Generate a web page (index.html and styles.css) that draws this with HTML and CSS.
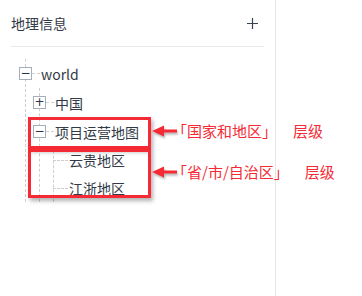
FILE: index.html
```html
<!DOCTYPE html>
<html lang="zh-CN">
<head>
  <meta charset="UTF-8">
  <title>地理信息</title>
  <link rel="stylesheet" href="styles.css">
</head>
<body>

<div class="page">
  <div class="sidebar">
    <div class="panel-head">
      <h2>地理信息</h2>
      <svg class="add" width="11" height="11" viewBox="0 0 11 11">
        <path d="M5.5 0v11M0 5.5h11" stroke="#3a4150" stroke-width="1.2"/>
      </svg>
    </div>

    <ul class="tree root">
      <li>
        <div class="node">
          <span class="toggle">&minus;</span><span class="dash"></span><span class="label">world</span>
        </div>
        <ul class="tree">
          <li>
            <div class="node">
              <span class="toggle">+</span><span class="dash"></span><span class="label">中国</span>
            </div>
          </li>
          <li>
            <div class="node">
              <span class="toggle">&minus;</span><span class="dash"></span><span class="label">项目运营地图</span>
            </div>
            <ul class="tree">
              <li>
                <div class="node leaf"><span class="dash"></span><span class="label">云贵地区</span></div>
              </li>
              <li>
                <div class="node leaf"><span class="dash"></span><span class="label">江浙地区</span></div>
              </li>
            </ul>
          </li>
        </ul>
      </li>
    </ul>
  </div>

  <!-- annotations drawn over the tree -->
  <div class="mark mark-country"></div>
  <div class="mark mark-province"></div>

  <div class="note note-country">
    <svg class="arrow" width="25" height="12" viewBox="0 0 25 12">
      <path d="M0 6L12 0.5V4.5H25V7.5H12V11.5Z" fill="#f52a34"/>
    </svg>
    <span>「国家和地区」</span><span class="level">层级</span>
  </div>
  <div class="note note-province">
    <svg class="arrow" width="25" height="12" viewBox="0 0 25 12">
      <path d="M0 6L12 0.5V4.5H25V7.5H12V11.5Z" fill="#f52a34"/>
    </svg>
    <span>「省/市/自治区」</span><span class="level">层级</span>
  </div>
</div>

</body>
</html>
```

FILE: styles.css
```css
body {
  margin: 0;
  font-family: "Noto Sans CJK SC", "Noto Sans", sans-serif;
  color: #333;
  background: #fff;
}
.page {
  position: relative;
  height: 296px;
  overflow: hidden;
}
.sidebar {
  width: 275px;
  height: 100%;
  border-right: 1px solid #e6e6e6;
  box-sizing: content-box;
}
.panel-head {
  display: flex;
  align-items: center;
  justify-content: space-between;
  margin: 0 11px;
  height: 46px;
  border-bottom: 1px solid #e8e8e8;
}
.panel-head h2 {
  margin: 0;
  font-size: 14px;
  font-weight: normal;
  color: #333a47;
}
.add {
  margin-right: 6px;
}
.tree {
  list-style: none;
  margin: 0;
  padding: 0;
  border-left: 1px dashed #cfcfcf;
}
.root {
  margin: 12px 0 0 25px;
}
.tree .tree {
  margin-left: 13px;
}
.node {
  display: flex;
  align-items: center;
  height: 29px;
  font-size: 14px;
}
.tree .tree .tree .node {
  height: 28px;
}
.toggle {
  width: 11px;
  height: 11px;
  margin-left: -7px;
  border: 1px solid #a7aebb;
  background: #fff;
  color: #2b3447;
  font-family: "DejaVu Sans", sans-serif;
  font-size: 12px;
  line-height: 10px;
  text-align: center;
}
.dash {
  width: 8px;
  border-top: 1px dashed #cfcfcf;
}
.leaf .dash {
  width: 15px;
  margin-left: -1px;
}
.label {
  margin-left: 1px;
  color: #333a47;
}
.node .label:first-letter {
  letter-spacing: 0;
}
.mark {
  position: absolute;
  left: 28px;
  width: 117px;
  border: 3px solid #f52a34;
  box-shadow: 2px 3px 4px rgba(0, 0, 0, 0.3);
}
.mark-country {
  top: 117px;
  height: 26px;
}
.mark-province {
  top: 149px;
  height: 43px;
}
.note {
  position: absolute;
  left: 152px;
  display: flex;
  align-items: center;
  font-size: 15px;
  color: #f52a34;
}
.note-country {
  top: 120px;
}
.note-province {
  top: 161px;
}
.arrow {
  filter: drop-shadow(1px 2px 1px rgba(0, 0, 0, 0.3));
  margin-right: -5px;
}
.level {
  margin-left: 16px;
}
```
